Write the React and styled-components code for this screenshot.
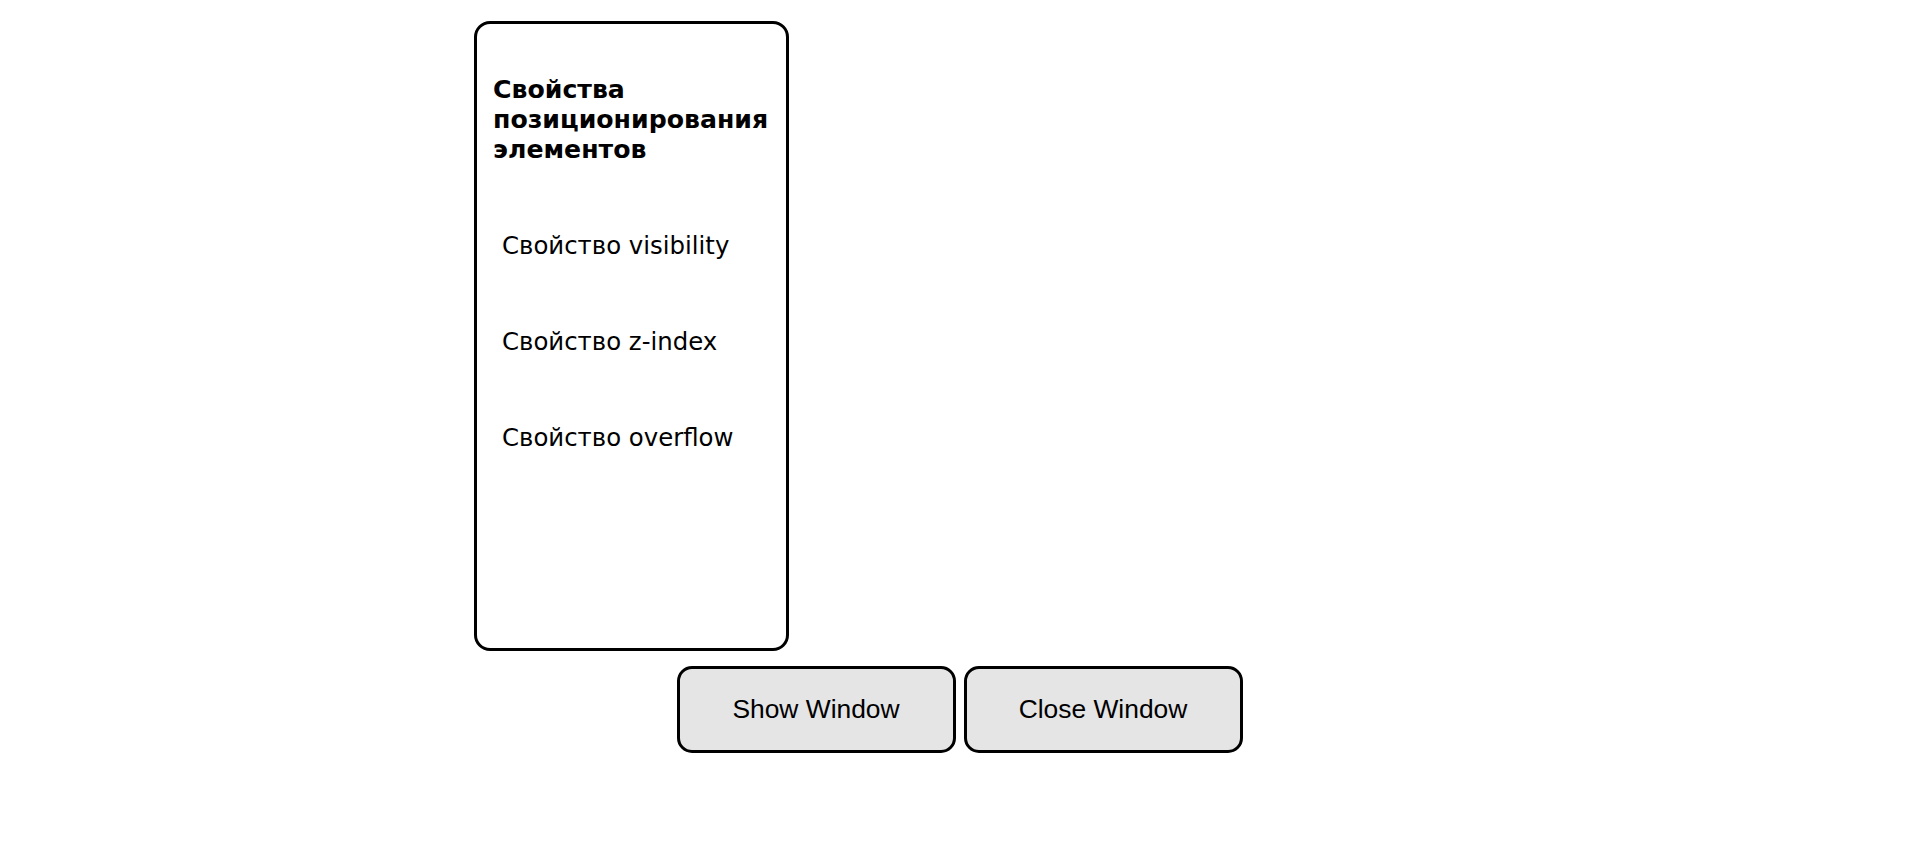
import React from "react";
import styled, { createGlobalStyle } from "styled-components";

const GlobalStyle = createGlobalStyle`
  body {
    margin: 0;
    background: #fff;
    color: #000;
    font-family: "DejaVu Sans", Verdana, sans-serif;
  }
`;

const Page = styled.div`
  padding-top: 21px;
`;

const Panel = styled.div`
  box-sizing: border-box;
  margin-left: 474px;
  width: 315px;
  height: 630px;
  border: 3px solid #000;
  border-radius: 16px;
  padding: 51px 16px 0 16px;
`;

const Title = styled.h2`
  margin: 0;
  font-size: 25.2px;
  line-height: 30px;
  font-weight: 700;
`;

const Menu = styled.ul`
  list-style: none;
  margin: 66px 0 0;
  padding: 0 0 0 9px;
  display: flex;
  flex-direction: column;
  gap: 67px;
`;

const MenuItem = styled.li`
  font-size: 24.4px;
  line-height: 29px;
  white-space: nowrap;
`;

const Buttons = styled.div`
  display: flex;
  justify-content: center;
  gap: 8px;
  margin-top: 15px;
  padding-left: 2px;
`;

const Button = styled.button`
  box-sizing: border-box;
  width: ${(p) => p.$w}px;
  height: 87px;
  border: 3px solid #000;
  border-radius: 15px;
  background: #e5e5e5;
  color: #000;
  font-family: "Liberation Sans", Arial, sans-serif;
  font-size: 26.4px;
  padding: 0;
  cursor: pointer;
`;

const items = ["Свойство visibility", "Свойство z-index", "Свойство overflow"];

export default function App() {
  return (
    <Page>
      <GlobalStyle />
      <Panel>
        <Title>Свойства позиционирования элементов</Title>
        <Menu>
          {items.map((t) => (
            <MenuItem key={t}>{t}</MenuItem>
          ))}
        </Menu>
      </Panel>
      <Buttons>
        <Button $w={279}>Show Window</Button>
        <Button $w={279}>Close Window</Button>
      </Buttons>
    </Page>
  );
}
